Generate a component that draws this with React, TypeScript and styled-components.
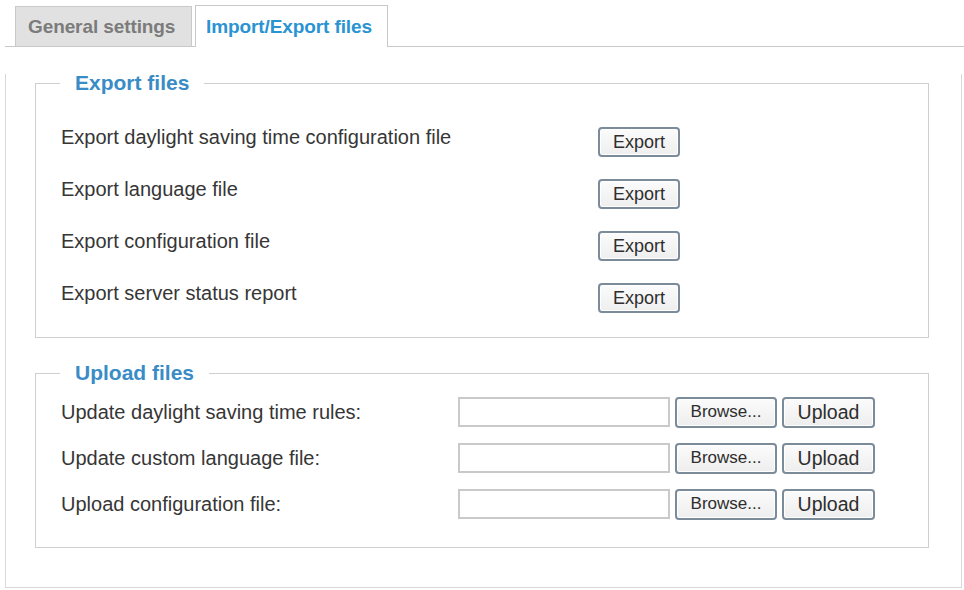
import React from "react";
import styled, { createGlobalStyle } from "styled-components";

const Global = createGlobalStyle`
  html, body { margin: 0; padding: 0; background: #ffffff; }
  body { font-family: "Liberation Sans", Arial, sans-serif; color: #333; }
`;

const Page = styled.div`
  width: 964px;
  height: 590px;
  overflow: hidden;
  background: #fff;
`;

const TabBar = styled.div`
  display: flex;
  align-items: flex-end;
  gap: 3px;
  margin-left: 5px;
  padding: 5px 0 0 10px;
  height: 41px;
  border-bottom: 1px solid #c9c9c9;
`;

const Tab = styled.div<{ $active?: boolean }>`
  box-sizing: border-box;
  display: flex;
  align-items: center;
  font-size: 19px;
  font-weight: bold;
  letter-spacing: -0.1px;
  white-space: nowrap;
  border: 1px solid #c9c9c9;
  border-bottom: none;
  ${(p) =>
    p.$active
      ? `
    width: 193px;
    height: 42px;
    margin-bottom: -1px;
    padding: 0 0 0 10px;
    background: #fff;
    color: #2a93d2;
  `
      : `
    width: 177px;
    height: 40px;
    padding: 0 0 0 12px;
    background: #e1e1e1;
    color: #7b7b7b;
  `}
`;

const Panel = styled.div`
  box-sizing: border-box;
  margin: 27px 2px 0 5px;
  height: 514px;
  border: 1px solid #d9d9d9;
  border-top: none;
  padding: 0 32px 0 29px;
  display: flex;
  flex-direction: column;
  gap: 26px;
`;

const Group = styled.fieldset<{ $pb: number }>`
  margin: 0;
  border: 1px solid #cfcfcf;
  padding: 0 0 ${(p) => p.$pb}px 25px;
  min-width: 0;
`;

const Legend = styled.legend`
  margin-left: -1px;
  padding: 0 15px;
  font-size: 21px;
  line-height: 18px;
  font-weight: bold;
  color: #3a8cc6;
`;

const ExportList = styled.div`
  margin-top: 19px;
  display: grid;
  grid-template-columns: 537px 82px;
  grid-auto-rows: 52px;
  align-items: center;
  justify-content: start;
`;

const Label = styled.div`
  font-size: 20px;
  color: #363636;
  white-space: nowrap;
`;

const Btn = styled.button<{ $h: number; $fs: number }>`
  box-sizing: border-box;
  width: 100%;
  height: ${(p) => p.$h}px;
  padding: 0;
  font-family: "Liberation Sans", Arial, sans-serif;
  font-size: ${(p) => p.$fs}px;
  color: #2e2e2e;
  border: 2px solid #7c8b9a;
  border-radius: 4px;
  background: linear-gradient(#fbfbfb, #eeeeee);
  box-shadow: inset 0 0 0 1px #fff;
`;

const ExportBtn = styled(Btn)`
  margin-top: 10px;
`;

const UploadList = styled.div`
  margin-top: 7px;
  display: grid;
  grid-template-columns: 392px 212px 102px 93px;
  grid-auto-rows: 46px;
  align-items: center;
  justify-content: start;
  column-gap: 5px;
`;

const FileBox = styled.div`
  box-sizing: border-box;
  height: 30px;
  border: 2px solid #c9c9c9;
  background: #fff;
`;

const exportsRows = [
  "Export daylight saving time configuration file",
  "Export language file",
  "Export configuration file",
  "Export server status report",
];

const uploadRows = [
  "Update daylight saving time rules:",
  "Update custom language file:",
  "Upload configuration file:",
];

export default function App() {
  return (
    <Page>
      <Global />
      <TabBar>
        <Tab>General settings</Tab>
        <Tab $active>Import/Export files</Tab>
      </TabBar>
      <Panel>
        <Group $pb={18}>
          <Legend>Export files</Legend>
          <ExportList>
            {exportsRows.map((t) => (
              <React.Fragment key={t}>
                <Label>{t}</Label>
                <ExportBtn $h={30} $fs={18}>
                  Export
                </ExportBtn>
              </React.Fragment>
            ))}
          </ExportList>
        </Group>
        <Group $pb={20}>
          <Legend>Upload files</Legend>
          <UploadList>
            {uploadRows.map((t) => (
              <React.Fragment key={t}>
                <Label>{t}</Label>
                <FileBox />
                <Btn $h={31} $fs={17}>
                  Browse...
                </Btn>
                <Btn $h={31} $fs={19.5}>
                  Upload
                </Btn>
              </React.Fragment>
            ))}
          </UploadList>
        </Group>
      </Panel>
    </Page>
  );
}
